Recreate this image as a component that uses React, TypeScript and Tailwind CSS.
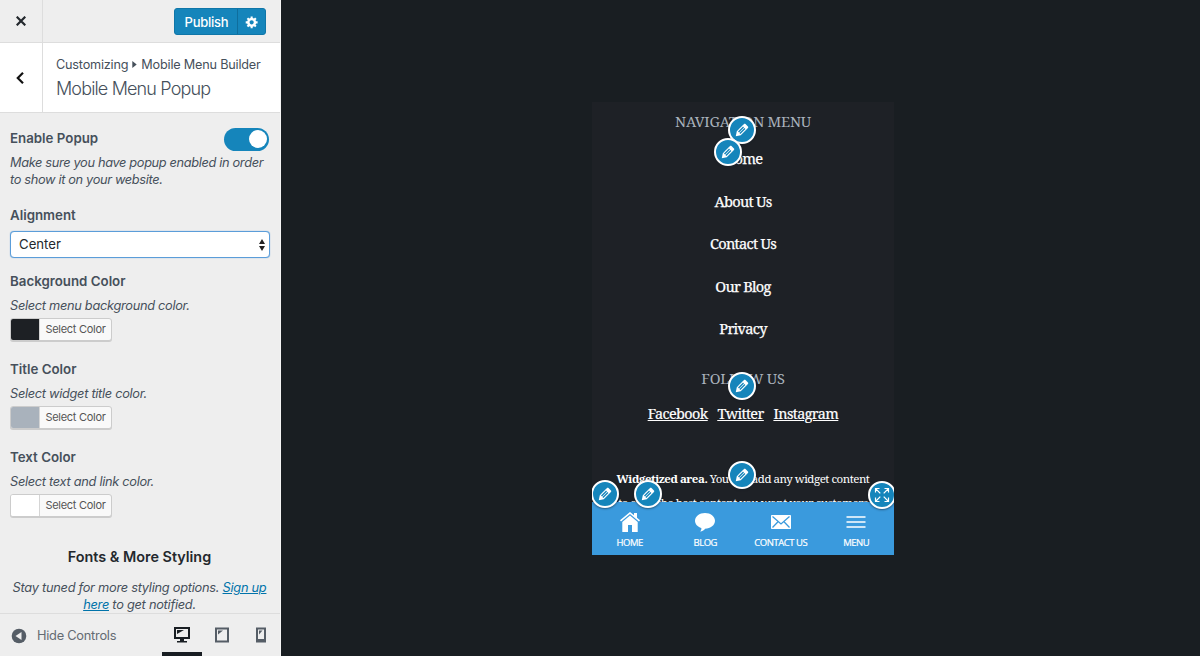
import React from "react";

const PENCIL =
  "M13.89 3.39l2.71 2.72c.46.46.42 1.24.03 1.64l-8.01 8.02-5.56 1.16 1.16-5.58s7.6-7.63 7.99-8.03c.39-.39 1.22-.39 1.68.07zm-2.73 2.79l-5.59 5.61 1.11 1.11 5.54-5.65zm-2.97 8.23l5.58-5.6-1.07-1.08-5.59 5.6z";

function EditBadge({ className, kind = "pencil" }: { className: string; kind?: "pencil" | "expand" }) {
  return (
    <button
      aria-label="Edit"
      className={"absolute z-10 flex h-7 w-7 items-center justify-center rounded-full border-2 border-white bg-[#1585bb] text-white shadow-[0_1px_2px_rgba(20,30,40,0.5)] " + className}
    >
      {kind === "pencil" ? (
        <svg viewBox="0 0 20 20" className="h-[18px] w-[18px]" fill="currentColor">
          <path d={PENCIL} />
        </svg>
      ) : (
        <svg viewBox="0 0 16 16" className="h-4 w-4" fill="none" stroke="currentColor" strokeWidth="1.2">
          <path d="M1.500 5.500v-4h4M1.500 1.500l4.800 4.800M10.500 1.500h4v4M14.500 1.500l-4.800 4.800M1.500 10.500v4h4M1.500 14.500l4.800-4.800M14.500 10.500v4h-4M14.500 14.500l-4.800-4.800" />
        </svg>
      )}
    </button>
  );
}

function ColorControl({ title, note, swatch }: { title: string; note: string; swatch: string }) {
  return (
    <section className="h-[88px]">
      <h3 className="h-6 text-[13.3px] font-semibold leading-6 text-[#46505b]">{title}</h3>
      <p className="h-6 text-[12.8px] italic leading-[25px] tracking-[-0.3px]">{note}</p>
      <button className="mt-px flex h-[23px] w-[102px] overflow-hidden rounded-[3px] border border-[#ccc] bg-[#f9f9f9] shadow-[0_1px_0_#ccc]">
        <span className={"h-full w-[29px] shrink-0 border-r border-[#d5d5d5] " + swatch} />
        <span className="flex-1 text-center text-[11px] leading-[21px] tracking-[-0.28px] text-[#555]">Select Color</span>
      </button>
    </section>
  );
}

function Sidebar() {
  return (
    <aside className="flex h-full w-[281px] shrink-0 flex-col border-r border-[#f5f5f5] bg-[#eee] text-[#46505b]">
      <header className="flex h-[43px] shrink-0 border-b border-[#ddd]">
        <button aria-label="Close" className="flex w-[43px] items-center justify-center border-r border-[#ddd]">
          <svg viewBox="0 0 10 10" className="h-[10px] w-[10px]" stroke="#23282d" strokeWidth="2.2">
            <path d="M.7.7l8.600 8.600M9.300.7L.7 9.300" />
          </svg>
        </button>
        <div className="flex flex-1 items-center justify-end pr-[14px] pt-px">
          <div className="flex h-[27px] w-[92px] overflow-hidden rounded-[3px] border border-[#0f76a8] bg-[#1585bb] text-white">
            <button className="w-[63px] border-r border-[#0f6e9d] pl-px text-[13px] font-medium leading-[26px] tracking-[-0.25px]">Publish</button>
            <button aria-label="Settings" className="flex flex-1 items-center justify-center">
              <svg viewBox="0 0 20 20" className="h-[14px] w-[14px]" fill="currentColor">
                <path d="M18 12h-2.180c-.17.7-.44 1.350-.81 1.930l1.540 1.540-2.100 2.100-1.540-1.540c-.58.36-1.230.63-1.910.79V19H8v-2.180c-.68-.16-1.330-.43-1.910-.79l-1.540 1.540-2.120-2.120 1.540-1.540c-.36-.58-.63-1.230-.79-1.910H1V9.030h2.170c.16-.7.44-1.350.8-1.940L2.430 5.550l2.100-2.100 1.540 1.540c.58-.37 1.240-.64 1.930-.81V2h3v2.180c.68.160 1.330.43 1.910.79l1.540-1.540 2.120 2.120-1.540 1.540c.36.590.64 1.240.8 1.940H18V12zm-8.500 1.500c1.660 0 3-1.340 3-3s-1.340-3-3-3-3 1.340-3 3 1.340 3 3 3z" />
              </svg>
            </button>
          </div>
        </div>
      </header>

      <div className="flex h-[70px] shrink-0 border-b border-[#ddd] bg-white">
        <button aria-label="Back" className="flex w-[43px] items-center justify-center border-r border-[#ddd] pr-[2px]">
          <svg viewBox="0 0 8 12" className="h-3 w-2" fill="none" stroke="#111" strokeWidth="2.2">
            <path d="M7 .8L1.800 6 7 11.200" />
          </svg>
        </button>
        <div className="pl-[13px] pt-3">
          <p className="flex items-center whitespace-nowrap text-[12.7px] leading-[19px] tracking-[-0.21px]">
            Customizing
            <svg viewBox="0 0 5 8" className="mx-[4px] h-[7px] w-[5px]" fill="#46505b"><path d="M0 0l5 4-5 4z" /></svg>
            Mobile Menu Builder
          </p>
          <h2 className="text-[18px] font-light leading-[29px] tracking-[-0.85px]">Mobile Menu Popup</h2>
        </div>
      </div>

      <main className="flex-1 overflow-hidden pl-[10px] pr-[11px] pt-[14px]">
        <section className="h-[78px]">
          <div className="flex h-6 items-center justify-between">
            <h3 className="text-[13.3px] font-semibold">Enable Popup</h3>
            <button role="switch" aria-checked="true" aria-label="Enable Popup" className="flex h-[23px] w-[45px] items-center justify-end rounded-full bg-[#1585bb] pr-[2px]">
              <span className="h-[18px] w-[18px] rounded-full bg-white" />
            </button>
          </div>
          <p className="mt-[3px] whitespace-nowrap text-[12.8px] italic leading-[17px] tracking-[-0.35px]">
            Make sure you have popup enabled in order<br />to show it on your website.
          </p>
        </section>
        <section className="h-[64px]">
          <h3 className="h-[26px] text-[13.3px] font-semibold leading-[21px]">Alignment</h3>
          <div className="flex h-[27px] w-[260px] items-center justify-between rounded-[4px] border border-[#5b9dd9] bg-white pl-2 pr-1 text-[13.2px] text-[#23282d] shadow-[0_0_1px_#5b9dd9]">
            Center
            <svg viewBox="0 0 6 12" className="h-3 w-[6px]" fill="#222"><path d="M3 0l3 5H0zM3 12L0 7h6z" /></svg>
          </div>
        </section>
        <ColorControl title="Background Color" note="Select menu background color." swatch="bg-[#1d2024]" />
        <ColorControl title="Title Color" note="Select widget title color." swatch="bg-[#a9b2bc]" />
        <ColorControl title="Text Color" note="Select text and link color." swatch="bg-white" />
        <section className="pt-[11px] text-center">
          <h3 className="h-[23px] text-[14.4px] font-semibold leading-[25px] text-[#23282d]">Fonts &amp; More Styling</h3>
          <p className="mt-[12px] whitespace-nowrap text-[12.8px] italic leading-[17px] tracking-[-0.26px]">
            Stay tuned for more styling options. <a className="text-[#0073aa] underline">Sign up</a><br />
            <a className="text-[#0073aa] underline">here</a> to get notified.
          </p>
        </section>
      </main>

      <footer className="flex h-[43px] shrink-0 border-t border-[#ddd]">
        <button className="flex flex-1 items-center gap-[10px] pl-[11px] pt-[2px] text-[12.8px] tracking-[-0.25px] text-[#646b72]">
          <svg viewBox="0 0 16 16" className="h-4 w-4"><circle cx="8" cy="8" r="7.300" fill="#555d66" /><path d="M10.500 4v8L4.500 8z" fill="#eee" /></svg>
          Hide Controls
        </button>
        <div className="flex">
          <button aria-label="Desktop" className="flex w-10 items-center justify-center border-b-4 border-[#191e23] pt-1">
            <svg viewBox="0 0 16 16" className="h-4 w-4"><path fill="#191e23" fillRule="evenodd" d="M0 0h16v12h-6v2h3v1.500H3V14h3v-2H0zM2 2v8h12V2z" /><path fill="#191e23" d="M3 3h7L3 7z" /></svg>
          </button>
          <button aria-label="Tablet" className="flex w-[39px] items-center justify-center">
            <svg viewBox="0 0 14 16" className="h-4 w-[14px]"><path fill="#555d66" fillRule="evenodd" d="M0 .5h14v15H0zM2 2.500v11h10v-11z" /><path fill="#555d66" d="M3 3.500h5l-5 4z" /></svg>
          </button>
          <button aria-label="Mobile" className="flex w-[39px] items-center justify-center">
            <svg viewBox="0 0 10 16" className="h-4 w-[10px]"><path fill="#555d66" fillRule="evenodd" d="M0 .5h10v15H0zM2 2.500v9.500h6V2.500z" /><path fill="#555d66" d="M3 3.500h3.500l-3.500 4z" /></svg>
          </button>
        </div>
      </footer>
    </aside>
  );
}

const links = ["Home", "About Us", "Contact Us", "Our Blog", "Privacy"];

const tabs = [
  { label: "HOME", icon: <svg viewBox="0 0 20 20" className="h-5 w-5" fill="currentColor"><path d="M10 0L0 8.300l1 1.200 9-7.500 9 7.500 1-1.200-3-2.500V1h-3v2.300zM10 3.600L2.300 10v10H8v-7h4v7h5.700V10z" /></svg> },
  { label: "BLOG", icon: <svg viewBox="0 0 20 20" className="h-5 w-5" fill="currentColor"><path d="M10 1c5.600 0 10 3.500 10 7.800s-4.400 7.900-10 7.900c-.5 1.300-2.700 2.400-4.900 2.800 1-1 1.500-2.300 1.200-3.500C2.600 14.800 0 12.100 0 8.800 0 4.500 4.400 1 10 1z" /></svg> },
  { label: "CONTACT US", icon: <svg viewBox="0 0 20 20" className="h-5 w-5"><rect y="3" width="20" height="14" rx=".8" fill="currentColor" /><path d="M1.500 4.500L10 12l8.500-7.500M1.500 15.500L7 9.800M18.500 15.500L13 9.800" fill="none" stroke="#3a9add" strokeWidth="1.300" /></svg> },
  { label: "MENU", icon: <svg viewBox="0 0 20 20" className="h-5 w-5" stroke="currentColor" strokeWidth="1.500"><path d="M.5 5h19M.5 10h19M.5 15h19" /></svg> },
];

function PhonePreview() {
  return (
    <div className="relative mt-[102px] h-[453px] w-[302px] bg-[#1e2126] text-center font-['Noto_Serif','Droid_Serif','DejaVu_Serif_Condensed','DejaVu_Serif',serif] text-white">
      <div className="h-[400px] overflow-hidden pt-[7px]">
        <h2 className="h-[31px] text-[14.6px] leading-6 tracking-[-0.25px] text-[#a9b2bc]">NAVIGATION MENU</h2>
        <nav className="flex flex-col">
          {links.map((label) => (
            <a key={label} className="h-[42.5px] text-[14.6px] leading-[37px] tracking-[-0.72px] [-webkit-text-stroke:0.25px_white]">{label}</a>
          ))}
        </nav>
        <h2 className="mt-[8px] h-[35px] text-[14.6px] leading-[35px] tracking-[-0.25px] text-[#a9b2bc]">FOLLOW US</h2>
        <p className="flex h-[35px] justify-center gap-[10px] text-[14.4px] leading-[35px] tracking-[-0.62px] underline [-webkit-text-stroke:0.2px_white]">
          <a>Facebook</a><a>Twitter</a><a>Instagram</a>
        </p>
        <p className="mt-[36px] whitespace-nowrap text-[11.5px] leading-6 tracking-[-0.48px]">
          <strong>Widgetized area.</strong> You can add any widget content<br />to offer the best content you want your customers
        </p>
      </div>
      <nav className="grid h-[53px] grid-cols-4 bg-[#3a9add] font-['Open_Sans','Noto_Sans',sans-serif]">
        {tabs.map((t) => (
          <a key={t.label} className="flex flex-col items-center whitespace-nowrap pt-[10px] text-[9.5px] leading-[21px] tracking-[-0.48px] [-webkit-text-stroke:0.2px_white]">{t.icon}{t.label}</a>
        ))}
      </nav>
      <EditBadge className="left-[136px] top-[14px]" />
      <EditBadge className="left-[122px] top-[36px]" />
      <EditBadge className="left-[136px] top-[270px]" />
      <EditBadge className="left-[136px] top-[359px]" />
      <div className="pointer-events-none absolute inset-0 overflow-hidden">
        <EditBadge className="left-[-1px] top-[378px]" />
        <EditBadge className="left-[42px] top-[378px]" />
        <EditBadge className="left-[276px] top-[379px]" kind="expand" />
      </div>
    </div>
  );
}

export default function App() {
  return (
    <div className="flex h-[656px] w-[1200px] overflow-hidden bg-[#191e22] font-['Inter','Liberation_Sans',sans-serif]">
      <Sidebar />
      <div className="flex flex-1 pl-[311px]"><PhonePreview /></div>
    </div>
  );
}
